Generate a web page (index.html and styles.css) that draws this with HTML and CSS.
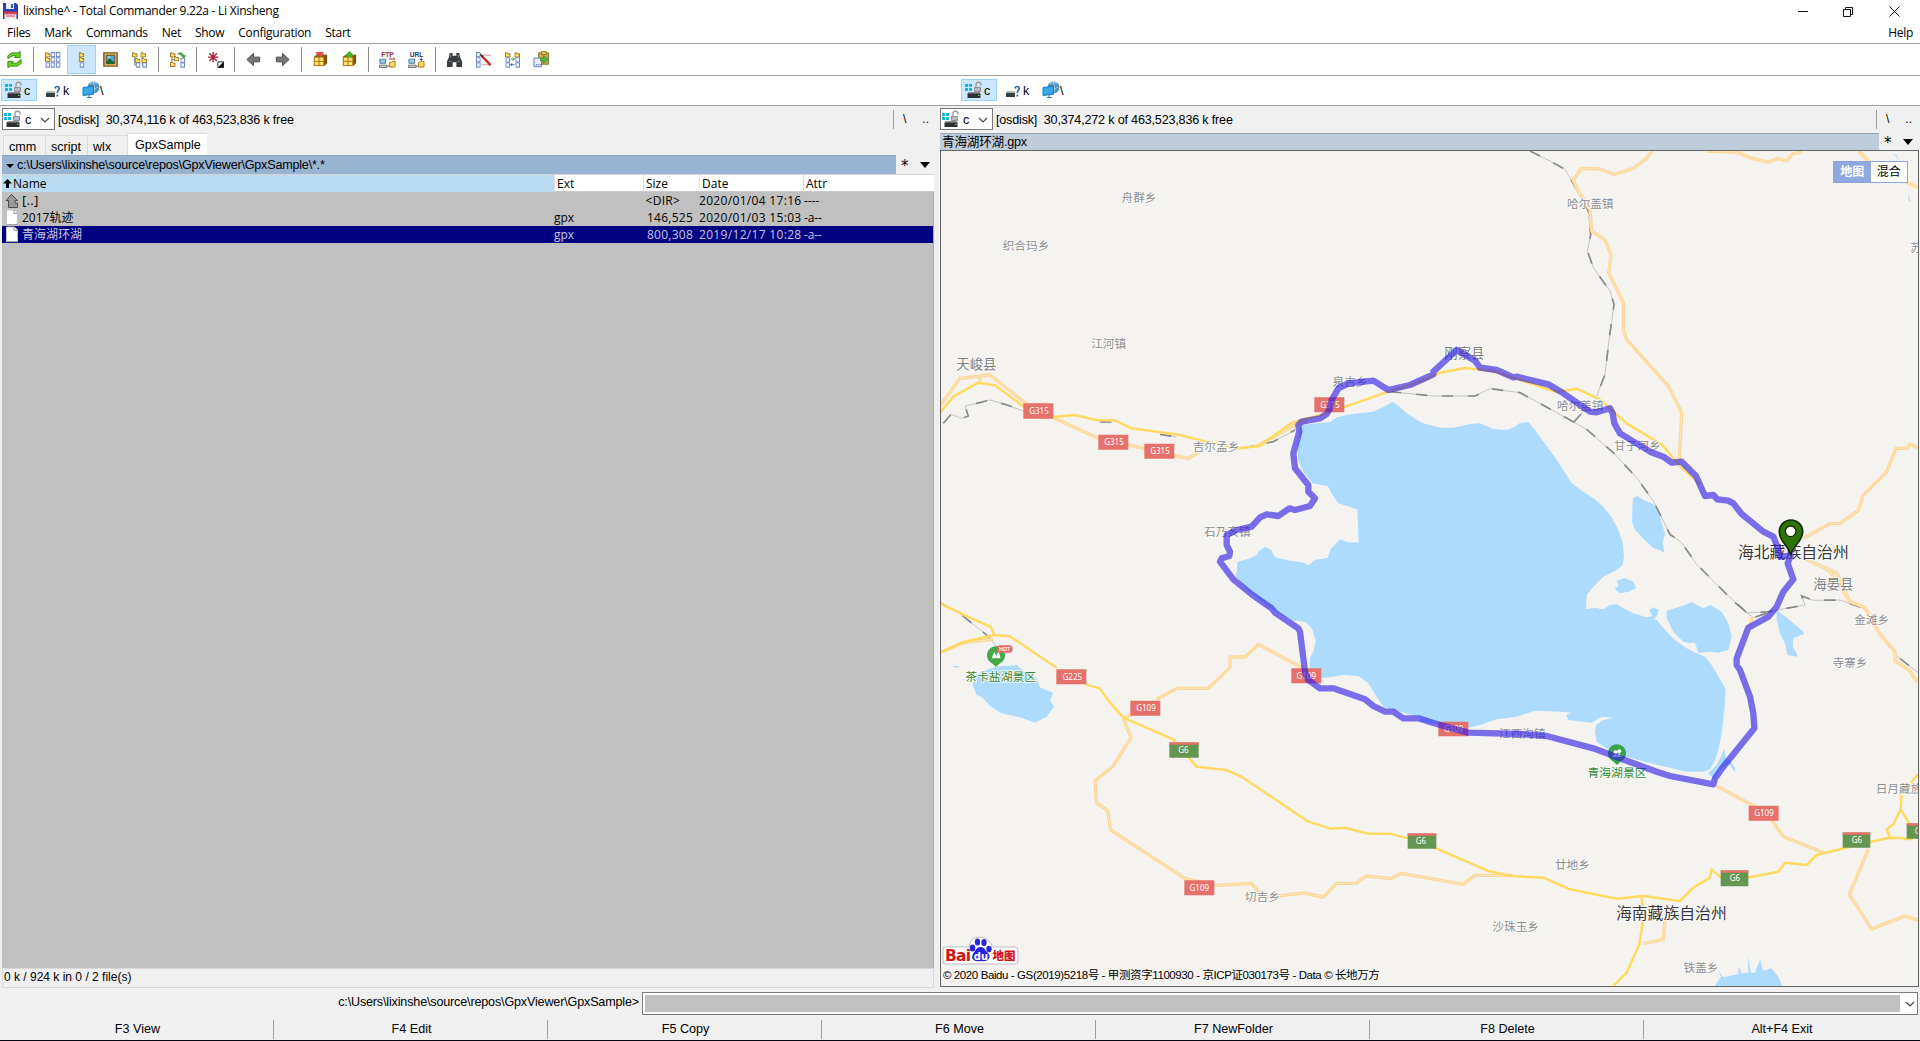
FILE: index.html
```html
<!DOCTYPE html>
<html lang="zh-CN">
<head>
<meta charset="utf-8">
<title>Total Commander</title>
<link rel="stylesheet" href="styles.css">
</head>
<body>
<svg width="0" height="0" class="defs">
  <defs>
    <symbol id="doc" viewBox="0 0 5 6"><rect x=".5" y=".5" width="4" height="4.6" fill="#eef1ff" stroke="#6378b8"/></symbol>
    <symbol id="fold" viewBox="0 0 6 6"><path d="M.5 1h2l.8 1h2.2v3.4H.5z" fill="#ffe069" stroke="#8d6a12"/></symbol>
    <symbol id="drive" viewBox="0 0 18 18">
      <path fill="#19b5dd" d="M0 3h3v3H0zM4 3h3v3H4zM0 7h3v3H0zM4 7h3v3H4z"/>
      <path d="M11 6V4a2.500 2.500 0 0 1 5-.500v1" fill="none" stroke="#999" stroke-width="1.300"/>
      <path d="M9.500 6.500h6v4h-6z" fill="#b9bcbe" stroke="#8c8f92"/>
      <path d="M3.500 11h11l1 2h-13z" fill="#8e9193"/><path d="M2.500 12.500h13V17h-13z" fill="#2e3133"/>
      <path d="M13 14.500h1.500" stroke="#5fe05f"/>
    </symbol>
    <symbol id="qdrive" viewBox="0 0 18 18">
      <path d="M3 10h7l1 2.500H2z" fill="#aeb1b3"/><path d="M2 12h9v4H2z" fill="#393c3e"/>
      <path d="M11 7.500q.300-2 2.200-2 2 0 2 1.900 0 1.100-1 2-.900.700-.900 2.600M13.300 13.500v2" fill="none" stroke="#3568a8" stroke-width="1.700"/>
    </symbol>
    <symbol id="net" viewBox="0 0 18 18">
      <circle cx="11.500" cy="6.500" r="6" fill="#4f93bd"/><path d="M8 3q3-3 7-.500M7 7q4 3 9-1M11 1q3 5 1 11" stroke="#a5d3ea" fill="none"/>
      <path d="M1 6.500l10.500-1.300v8L1 14.500z" fill="#36a9e6" stroke="#1b78b5"/><path d="M5 16.500h5M7 14v3" stroke="#347ca5"/>
    </symbol>
    <symbol id="box" viewBox="0 0 16 16">
      <path d="M1 5l3-2h11v9l-3 3H1z" fill="#7a520d"/><path d="M1.500 5.500h10v9h-10z" fill="#ffe16e" stroke="#b07c15"/><path d="M6.500 5.500v9M1.500 10h10" stroke="#a8740f"/>
    </symbol>
    <symbol id="conn" viewBox="0 0 18 10">
      <path d="M1 .500h6v4.500H1z" fill="#8fd0f5" stroke="#53708e"/><path d="M.500 7h8v2.500h-8z" fill="#c9c9c9" stroke="#777"/>
      <path d="M8.500 8h3" stroke="#777"/><path d="M11 4h2l1-1h3v6h-6z" fill="#ffd661" stroke="#a67a19"/>
    </symbol>
    <symbol id="chev" viewBox="0 0 10 10"><path d="M1 3l4 4 4-4" fill="none" stroke="#444" stroke-width="1.100"/></symbol>
    <symbol id="page" viewBox="0 0 14 17"><path d="M1.500 1h8l3 3v11.500h-11z" fill="#fff" stroke="#c8c8c8"/><path d="M9 1v3.500h3.500M2 15.700h11" fill="none" stroke="#9a9a9a"/></symbol>
  </defs>
</svg>

<header class="title">
  <svg class="app-icon" width="17" height="18" viewBox="0 0 17 18"><path d="M1 1h13l2 2v14H1z" fill="#2b3fb4"/><path d="M4 1h8v6H4z" fill="#e9eef8"/><path d="M9 2h2v4H9z" fill="#2d5fa5"/><path d="M2.500 10h12v7h-12z" fill="#f5e9ea"/><path d="M2.500 10h12v1.800h-12zM4 14h9" fill="#d23a49" stroke="#d23a49"/></svg>
  <span class="title-text">lixinshe^ - Total Commander 9.22a - Li Xinsheng</span>
  <svg class="win" width="120" height="20" viewBox="0 0 120 20" fill="none" stroke="#111"><path d="M4 10.500h10"/><path d="M49.500 8.500h7v7h-7zM51.500 8V6.500h7v7H57"/><path d="M95.500 5.500l10 10M105.500 5.500l-10 10"/></svg>
</header>
<nav class="menu"><span>Files</span><span>Mark</span><span>Commands</span><span>Net</span><span>Show</span><span>Configuration</span><span>Start</span><span class="help">Help</span></nav>

<div class="tools">
  <button><svg viewBox="0 0 18 18"><path d="M2 8V5l4-3h7l2-1.500V7H9l2-2H7z" fill="#6fd323" stroke="#318a0d"/><path d="M16 9v4l-4 3H5l-3 1.500V11h6l-2 2h5z" fill="#6fd323" stroke="#318a0d"/></svg></button><i></i>
  <button><svg viewBox="0 0 18 18"><use href="#fold" x="1" y="1" width="6" height="6"/><use href="#fold" x="1" y="6" width="6" height="6"/><use href="#doc" x="1.500" y="12" width="5" height="6"/><use href="#doc" x="7" y="1" width="5" height="6"/><use href="#doc" x="7" y="6.500" width="5" height="6"/><use href="#doc" x="7" y="12" width="5" height="6"/><use href="#doc" x="12.500" y="1" width="5" height="6"/><use href="#doc" x="12.500" y="6.500" width="5" height="6"/><use href="#doc" x="12.500" y="12" width="5" height="6"/></svg></button>
  <button class="on"><svg viewBox="0 0 18 18"><use href="#fold" x="6" y="1" width="6" height="6"/><use href="#fold" x="6" y="6" width="6" height="6"/><use href="#doc" x="7" y="12" width="5" height="6"/></svg></button>
  <button><svg viewBox="0 0 18 18"><path d="M2 2h14v14H2z" fill="#e9c672" stroke="#7a541a" stroke-width="1.500"/><path d="M4.500 4.500h9v9h-9z" fill="#4aa9d8" stroke="#5a471e"/><path d="M5 11l3-3 5 4v1.500H5z" fill="#17672f"/><path d="M6 6.500h3" stroke="#fff"/></svg></button>
  <button><svg viewBox="0 0 18 18"><path d="M4 6v9h3M12 6v9h3" stroke="#777" fill="none"/><use href="#fold" x="1" y="1" width="6" height="6"/><use href="#fold" x="4" y="7" width="6" height="6"/><use href="#doc" x="5" y="12" width="5" height="6"/><use href="#fold" x="10" y="1" width="6" height="6"/><use href="#fold" x="11" y="7" width="6" height="6"/><use href="#doc" x="12" y="12" width="5" height="6"/></svg></button><i></i>
  <button><svg viewBox="0 0 18 18"><path d="M3 3v13M3 9h3" stroke="#777" fill="none"/><use href="#fold" x="1" y="1" width="6" height="6"/><use href="#fold" x="5" y="5" width="6" height="6"/><use href="#fold" x="1" y="11" width="6" height="6"/><use href="#doc" x="12" y="7" width="5" height="6"/><use href="#doc" x="12" y="12" width="5" height="6"/><path d="M9 3q5-3 7 3M13.500 5h4l-2 2.500z" fill="#33a333" stroke="#33a333"/></svg></button><i></i>
  <button><svg viewBox="0 0 18 18"><path d="M6.500 1v11M1 6.500h11M2.500 2.500l8 8M10.500 2.500l-8 8" stroke="#a5233b" stroke-width="1.500"/><path d="M11.500 11.500h6v6h-6z" fill="#fff" stroke="#222"/><path d="M17.500 11.500v6h-6z" fill="#111"/></svg></button><i></i>
  <button><svg viewBox="0 0 18 18"><path d="M2 9l7-6.500v4h6.500v5H9v4z" fill="#777" stroke="#444"/></svg></button>
  <button><svg viewBox="0 0 18 18"><path d="M16 9L9 2.500v4H2.500v5H9v4z" fill="#777" stroke="#444"/></svg></button><i></i>
  <button><svg viewBox="0 0 18 18"><use href="#box" x="1" y="1" width="16" height="16"/><path d="M4 1h8v3L9 6 5 4z" fill="#e05050"/></svg></button>
  <button><svg viewBox="0 0 18 18"><use href="#box" x="1" y="1" width="16" height="16"/><path d="M9 0l5 5h-3v2H7V5H4z" fill="#42b722"/></svg></button><i></i>
  <button><svg viewBox="0 0 18 18"><text x="9" y="6.500" class="mini ftp">FTP</text><use href="#conn" x="0" y="8" width="18" height="10"/><path d="M11 8.500h6M11 8.500l1.500-1.500M17 8.500L15.500 7" stroke="#b03030" fill="none"/></svg></button>
  <button><svg viewBox="0 0 18 18"><text x="9" y="6.500" class="mini url">URL</text><use href="#conn" x="0" y="8" width="18" height="10"/><path d="M14 7v4M12.500 9h3" stroke="#27449b"/></svg></button><i></i>
  <button><svg viewBox="0 0 18 18"><path d="M4 2h3v3h4V2h3l1 5 2 4v6h-6v-5H7v5H1v-6l2-4z" fill="#3a3d40"/><path d="M3 11h3M12 11h3M5 4v3M13 4v3" stroke="#8d9297"/></svg></button>
  <button><svg viewBox="0 0 18 18"><use href="#doc" x="1" y="1" width="5" height="6"/><use href="#doc" x="1" y="6.500" width="5" height="6"/><use href="#doc" x="1" y="12" width="5" height="6"/><path d="M7 4.500h10M7 14.500h10" stroke="#c99"/><path d="M7 5l9.500 10" stroke="#c92626" stroke-width="2.500"/><path d="M5.500 3.500l2.500 2.500" stroke="#222" stroke-width="1.500"/></svg></button>
  <button><svg viewBox="0 0 18 18"><use href="#fold" x="1" y="1" width="6" height="6"/><use href="#fold" x="11" y="1" width="6" height="6"/><use href="#doc" x="1.500" y="6.500" width="5" height="6"/><use href="#doc" x="12" y="6.500" width="5" height="6"/><use href="#doc" x="1.500" y="12" width="5" height="6"/><use href="#doc" x="12" y="12" width="5" height="6"/><path d="M7 8.500h4M9.500 7L11 8.500 9.500 10" stroke="#229022" fill="none"/><path d="M11 14.500H7M8.500 13L7 14.500 8.500 16" stroke="#2763c2" fill="none"/></svg></button>
  <button><svg viewBox="0 0 18 18"><path d="M6 2h10.500v12H6z" fill="#c6ad5b" stroke="#7f6930"/><path d="M9 .500h5v3H9z" fill="#f2cf43" stroke="#8f7420"/><path d="M1 7.500h6l2 2v7H1z" fill="#e5edff" stroke="#6376c1"/><path d="M3 14.500h5" stroke="#24378f" stroke-dasharray="1 1"/><path d="M11 5l5 4-5 4v-2.500H8v-3h3z" fill="#55bd33" stroke="#2e7d18" stroke-width=".6"/></svg></button>
</div>

<div class="drivebar">
  <div class="drives"><span class="drv on"><svg><use href="#drive"/></svg>c</span><span class="drv"><svg><use href="#qdrive"/></svg>k</span><span class="drv net"><svg><use href="#net"/></svg>\</span></div>
  <div class="drives"><span class="drv on"><svg><use href="#drive"/></svg>c</span><span class="drv"><svg><use href="#qdrive"/></svg>k</span><span class="drv net"><svg><use href="#net"/></svg>\</span></div>
</div>

<main class="panels">
  <section class="panel">
    <div class="info"><span class="combo"><svg class="dv"><use href="#drive"/></svg>c<svg class="cv"><use href="#chev"/></svg></span><span class="free">[osdisk]&nbsp; 30,374,116 k of 463,523,836 k free</span><span class="up"><b>\</b><b>..</b></span></div>
    <div class="tabs"><span>cmm</span><span>script</span><span class="w3">wlx</span><span class="act">GpxSample</span></div>
    <div class="path"><span class="crumb"><svg width="9" height="6"><path d="M0 1h8L4 5z"/></svg>c:\Users\lixinshe\source\repos\GpxViewer\GpxSample\*.*</span><span class="pbtn"><em>*</em><svg width="10" height="6"><path d="M0 0h10L5 6z"/></svg></span></div>
    <div class="row head"><span class="name"><svg width="9" height="10"><path d="M4.500 0L9 4.500H6V9H3V4.500H0z"/></svg>Name</span><span>Ext</span><span>Size</span><span>Date</span><span>Attr</span></div>
    <div class="list">
      <div class="row"><span class="name"><svg width="14" height="16" viewBox="0 0 14 16"><path d="M6.500 1.500l6 6h-2.500v2.500h2.500v4.500h-9v-7H1z" fill="#999" stroke="#4c4c4c"/></svg><span class="parent">[..]</span></span><span></span><span class="size">&lt;DIR&gt;</span><span class="date">2020/01/04 17:16</span><span class="at">----</span></div>
      <div class="row"><span class="name"><svg width="14" height="17"><use href="#page"/></svg>2017轨迹</span><span>gpx</span><span class="size">146,525</span><span class="date">2020/01/03 15:03</span><span class="at">-a--</span></div>
      <div class="row sel"><span class="name"><svg width="14" height="17"><use href="#page"/></svg>青海湖环湖</span><span>gpx</span><span class="size">800,308</span><span class="date">2019/12/17 10:28</span><span class="at">-a--</span></div>
    </div>
    <div class="status">0 k / 924 k in 0 / 2 file(s)</div>
  </section>

  <section class="panel right">
    <div class="info"><span class="combo"><svg class="dv"><use href="#drive"/></svg>c<svg class="cv"><use href="#chev"/></svg></span><span class="free">[osdisk]&nbsp; 30,374,272 k of 463,523,836 k free</span><span class="up"><b>\</b><b>..</b></span></div>
    <div class="path"><span class="crumb">青海湖环湖.gpx</span><span class="pbtn"><em>*</em><svg width="10" height="6"><path d="M0 0h10L5 6z"/></svg></span></div>
    <div class="map">
      <svg class="canvas" width="978" height="835" viewBox="0 0 2934 2505">
        <!-- water -->
        <g class="water">
          <g transform="translate(0 267)"><path d="M1080 555L1170 546L1190 532L1235 522L1300 515L1335 499L1358 486L1375 497L1400 520L1445 548L1500 563V1210H1130L1118 1170L1100 1148L1080 1142H1060L1000 1110L930 1058L888 1010L893 965L930 955L950 945L958 932L975 920L993 930L1005 952L1050 962L1092 968L1105 976L1125 960L1163 953L1172 928L1200 898L1225 907L1256 908L1252 808L1195 790L1178 765L1163 738L1118 730L1090 695L1075 660L1072 620Z"/></g>
          <g transform="translate(1440 267)">
            <path d="M0 555L40 563H100L150 552L180 550L220 567L262 570L285 560L298 550L325 546L345 570L370 605L400 645L430 690L455 730L490 755L520 775L550 800L575 832L595 870L608 910L612 950L608 975L590 990L550 1010L520 1040L500 1065L498 1108L525 1103L550 1108L570 1095L590 1092L610 1105L640 1120L680 1132L697 1128L688 1110L700 1102L716 1110L712 1125L703 1138L725 1165L745 1200H0Z"/>
            <path d="M638 790L640 775L652 768L670 780L700 792L718 820L725 850L735 880L728 910L733 933L727 938L722 931L700 925L665 890L645 870L636 845Z"/>
            <path d="M583 1045L597 1038L590 1022L615 1014L640 1025L648 1045L625 1055L600 1060Z"/>
          </g>
          <g transform="translate(0 1347)">
            <path d="M1060 62L1095 64L1115 80L1128 120L1120 155L1110 175L1108 210L1145 235L1210 225L1255 228L1285 250L1310 290L1330 320L1380 335L1440 352L1500 368V60Z"/>
            <path d="M105 225L165 200L230 195L262 222L290 235L300 262L340 280L330 300L342 320L320 350L285 368L240 352L185 340L150 318L125 290L110 285L98 255Z"/>
            <path d="M36 197L60 198L50 204Z"/>
          </g>
          <g transform="translate(1440 1347)">
            <path d="M0 60H710L740 95L765 120L800 145L820 155L855 170L875 195L890 220L917 268L914 320L905 400L895 450L885 480L870 508L850 515H800L700 492L620 470L560 445L530 425L525 395L528 375L550 360L580 353L545 350L515 368L445 360L438 345L456 338L420 335L345 332L290 350L230 358L180 375L140 385L0 365Z"/>
            <path d="M740 32L795 15L815 7L850 25L870 15L905 35L925 70L935 110L925 150L895 158L870 155L835 158L825 128L808 130L790 125L760 95L740 55Z"/>
            <path d="M1070 30L1090 45L1120 70L1150 95L1152 102L1120 115L1118 140L1133 165L1130 170L1103 165L1095 130L1080 100L1070 60Z"/>
            <path d="M865 520L890 495L905 465L912 445L918 475L930 480L945 505V517L925 490L900 510L885 540Z"/>
            <path d="M883 1160L903 1130L893 1108L910 1132L955 1122V1098L965 1120L985 1118L983 1070L993 1118H1005L1020 1078L1030 1112L1055 1105L1075 1130L1088 1160Z"/>
          </g>
          <path d="M2862 8L2878 30L2870 12ZM2904 124L2912 152L2906 150Z"/>
        </g>
        <!-- railways -->
        <g class="rail">
          <g id="rails">
            <path d="M10 817L33 790L65 802L85 795L75 765L110 757L150 747L195 760L250 780"/>
            <path d="M480 813H515M660 850L710 858M905 892L1000 872L1065 837"/>
            <path d="M0 1355L60 1388L140 1452L172 1490V1530"/>
            <path d="M1350 722L1480 735H1605L1650 713L1740 725L1850 785L1940 835L2020 905L2090 980L2140 1050L2190 1150L2225 1175L2270 1240L2360 1330L2420 1385L2480 1383L2595 1362L2585 1335L2620 1348L2700 1347L2780 1375L2808 1430L2870 1515L2934 1565"/>
            <path d="M1900 815L1940 770M1770 0L1830 30L1875 55L1908 112L1945 180L1952 252L1942 300L1960 350L2010 420L2022 460L2008 560L1995 670L1970 735"/>
            <path d="M2385 1355L2440 1400L2500 1380"/>
          </g>
          <use href="#rails" class="dash"/>
        </g>
        <!-- secondary roads -->
        <g class="minor">
          <g id="minors">
            <path d="M0 765L60 682L150 672L255 755L350 805L475 862L600 890L745 923L790 895M120 675V695"/>
            <path d="M950 885L1070 820L1100 812"/>
            <path d="M650 1645L712 1612H805L870 1550V1518H915L955 1480L1090 1552"/>
            <path d="M550 1702L600 1680M550 1702L573 1760L520 1845L465 1890L470 1955L503 1980L512 2037L735 2182L830 2203L935 2197L970 2240L1090 2226L1150 2238L1190 2197H1248L1278 2175L1352 2183L1385 2167L1570 2200L1605 2173H1720"/>
            <path d="M2137 0L2120 22L2080 52L2023 70L1980 54L1925 52L1900 87L1915 122L1930 142L1950 177L1955 240L1995 267L2013 312L2006 365L2050 455V535L2060 565L2185 705L2225 785L2218 930"/>
            <path d="M2300 0L2390 3L2430 20L2485 34L2515 22L2540 30L2558 8L2585 4"/>
            <path d="M2755 0L2800 45L2934 110"/>
            <path d="M2590 1162L2670 1118H2700L2755 1078L2770 1032L2840 963L2868 892H2900L2910 880L2934 890"/>
            <path d="M2590 1220L2670 1260L2730 1352L2775 1370L2820 1450L2865 1500V1530L2905 1555L2934 1595M2610 1230L2690 1265L2730 1352"/>
            <path d="M2330 1905L2480 1985L2530 2057L2650 2105M2785 2095L2728 2230L2795 2335L2830 2320L2895 2295L2934 2308"/>
            <path d="M2175 2310L2170 2365L2110 2378M2430 1425L2438 1395M0 1505L70 1475L160 1465"/>
          </g>
          <use href="#minors" class="core"/>
        </g>
        <!-- highways -->
        <g class="major">
          <path d="M0 785L40 737L115 695L165 703L255 770L310 800L405 792L470 808H525L575 832L720 852L790 870L895 892L960 885L1055 815L1150 790L1345 722L1440 693L1500 665L1575 651L1660 660L1850 723L1910 713L1980 745L2060 817L2165 880L2220 945L2280 1000"/>
          <path d="M0 1357L90 1400L153 1428L163 1452L70 1473L0 1505M163 1452L210 1456L350 1550M435 1600L480 1612L500 1642L550 1700L700 1765L770 1847L858 1857L905 1877L1105 2012L1172 2033L1215 2030L1285 2048H1350L1450 2075L1500 2097L1600 2140L1645 2160L1715 2175L1810 2180L1890 2215L2030 2243L2110 2235L2220 2250L2260 2210L2310 2180L2315 2155L2340 2177L2420 2180L2515 2162L2535 2135L2600 2142L2630 2112L2700 2095L2840 2062L2875 2060L2910 2065L2934 2055"/>
          <path d="M2105 2240L2110 2300L2098 2380L2060 2465L2020 2505M2850 2060L2840 2035L2860 2020L2882 1975L2885 1925M2882 1975L2910 2020M2934 1870L2910 1900"/>
        </g>
        <!-- place names -->
        <g class="town">
          <text x="597" y="153">舟群乡</text><text x="1951" y="172">哈尔盖镇</text><text x="258" y="296">织合玛乡</text><text x="506" y="590">江河镇</text><text x="828" y="900">吉尔孟乡</text><text x="1230" y="706">泉吉乡</text><text x="862" y="1154">石乃亥镇</text><text x="1921" y="777">哈尔盖镇</text><text x="2092" y="898">甘子河乡</text><text x="2795" y="1420">金滩乡</text><text x="2730" y="1547">寺寨乡</text><text x="1747" y="1761">江西沟镇</text><text x="2877" y="1925">日月藏族</text><text x="1897" y="2155">廿地乡</text><text x="1727" y="2339">沙珠玉乡</text><text x="2283" y="2464">铁盖乡</text><text x="967" y="2251">切吉乡</text><text x="2928" y="302">苏</text>
        </g>
        <g class="county"><text x="109" y="655">天峻县</text><text x="1573" y="622">刚察县</text><text x="2680" y="1315">海晏县</text></g>
        <g class="pref"><text x="2560" y="1222">海北藏族自治州</text><text x="2194" y="2305">海南藏族自治州</text></g>
        <g class="scenic"><text x="182" y="1590">茶卡盐湖景区</text><text x="2031" y="1878">青海湖景区</text></g>
        <!-- scenic pins -->
        <g transform="translate(168 1514)"><path d="M0 34L-10 24A27 27 0 1 1 10 24Z" fill="#47a848"/><path d="M-13 8L-5-12 1 2V8M2 8V-4L8-12 14 8Z" fill="#fff"/></g>
        <g transform="translate(2031 1808)"><path d="M0 34L-10 24A27 27 0 1 1 10 24Z" fill="#36a447"/><circle cx="-5" cy="-4" r="6" fill="#fff"/><circle cx="7" cy="-7" r="6" fill="#fff"/><path d="M-14 10L-6 0 0 5 7-2 14 10Z" fill="#fff"/></g>
        <rect x="170" y="1483" width="48" height="22" rx="11" fill="#e96568"/><text x="194" y="1500" class="hot">HOT</text>
        <!-- road shields -->
        <g class="shield">
          <path class="red" d="M250 757h90v46h-90zM475 851h90v45h-90zM613 878h90v45h-90zM1123 739h90v45h-90zM349 1555h90v45h-90zM571 1649h90v45h-90zM1054 1552h90v45h-90zM733 2188h90v45h-90zM1495 1712h90v44h-90zM2426 1964h90v45h-90z"/>
          <path class="green" d="M688 1775h88v45h-88zM1403 2048h86v45h-86zM2708 2045h83v45h-83zM2342 2159h83v47h-83zM2900 2018h83v45h-83z"/>
          <path class="red" d="M688 1774h88v7h-88zM1403 2047h86v7h-86zM2708 2044h83v7h-83zM2342 2158h83v7h-83zM2900 2017h83v7h-83z"/>
          <text x="297" y="789">G315</text><text x="522" y="882">G315</text><text x="660" y="909">G315</text><text x="1170" y="771">G315</text><text x="397" y="1586">G225</text><text x="618" y="1680">G109</text><text x="1099" y="1584">G109</text><text x="778" y="2219">G109</text><text x="1541" y="1743">G109</text><text x="2472" y="1995">G109</text>
          <text x="730" y="1806">G6</text><text x="1443" y="2079">G6</text><text x="2751" y="2076">G6</text><text x="2385" y="2190">G6</text><text x="2940" y="2049">G6</text>
        </g>
        <!-- recorded track -->
        <path class="track" d="M2552 1214L2520 1217L2510 1182L2500 1157L2470 1142L2405 1089L2380 1057L2365 1049L2332 1045L2320 1032L2295 1035L2268 975L2225 932L2195 935L2170 917L2130 902L2040 847L2023 817L2018 787L2010 772L1970 784L1950 782L1870 727L1825 700L1730 677L1720 679L1670 657L1620 650L1605 629L1550 597L1480 662V670L1410 702L1345 717L1300 689L1225 697L1195 712L1175 747L1170 772L1160 789L1140 802L1085 812L1075 822L1078 842L1060 907L1065 952L1105 1002V1022L1125 1042L1110 1065L1065 1077L1048 1072L1015 1095L980 1090L960 1099L935 1127L890 1137L860 1152V1182L870 1202L868 1215L845 1222L840 1232L880 1285L935 1330L995 1372L1005 1385L1075 1432L1080 1442L1095 1562L1105 1587L1140 1612H1180L1275 1645L1300 1665L1335 1682H1360L1390 1702H1435L1500 1722L1585 1745L1740 1749L1820 1755L1960 1792L2040 1822L2150 1862L2190 1875L2320 1900L2325 1882L2350 1847L2443 1732L2440 1687L2430 1637L2400 1557L2390 1542V1522L2425 1430L2485 1397L2510 1367L2530 1322L2560 1285L2543 1237L2552 1214"/>
        <path d="M2552 1212C2546 1184 2518 1172 2518 1142A35 35 0 0 1 2588 1142C2588 1172 2558 1184 2552 1212Z" fill="#2d7407" stroke="#142b05" stroke-width="5"/><circle cx="2552" cy="1141" r="16" fill="#fff" stroke="#142b05" stroke-width="4"/>
      </svg>
      <div class="maptype"><span class="cur">地图</span><span>混合</span></div>
      <svg class="logo" width="78" height="30" viewBox="0 0 78 30">
        <path d="M3 11H27Q28 2 35 1.500Q44-1 50 9V11H73Q76 11 76 14V25Q76 28 73 28H3Q1 28 1 25V13Q1 11 3 11Z" fill="#fff" stroke="#bbb"/>
        <text x="3" y="25" class="bai">Bai</text>
        <g fill="#2826d7"><ellipse cx="30.500" cy="12" rx="2.800" ry="3.600"/><ellipse cx="35.500" cy="6" rx="2.700" ry="3.600"/><ellipse cx="42" cy="6.500" rx="2.700" ry="3.500"/><ellipse cx="47" cy="13" rx="2.700" ry="3.300"/><path d="M38.500 11Q42 11 44 15Q48 18 47.500 21.500Q46 26 38.500 25Q31 26 30 21.500Q30 18 33 15Q35 11 38.500 11Z"/></g>
        <text x="39" y="23.500" class="du">du</text><text x="50.500" y="24" class="ditu">地图</text>
      </svg>
      <div class="copy">© 2020 Baidu - GS(2019)5218号 - 甲测资字1100930 - 京ICP证030173号 - Data © 长地万方</div>
    </div>
  </section>
</main>

<div class="cmd"><label>c:\Users\lixinshe\source\repos\GpxViewer\GpxSample&gt;</label><div class="field"><div class="fill"></div><svg class="cv"><use href="#chev"/></svg></div></div>
<footer class="keys"><span>F3 View</span><span>F4 Edit</span><span>F5 Copy</span><span>F6 Move</span><span>F7 NewFolder</span><span>F8 Delete</span><span>Alt+F4 Exit</span></footer>
</body>
</html>
```
FILE: styles.css
```css
* { box-sizing: border-box; }
body { margin: 0; width: 1920px; height: 1041px; overflow: hidden; display: flex; flex-direction: column; background: #f0f0f0; color: #000; font: 12px/16px "Open Sans", "Noto Sans CJK SC", sans-serif; border-bottom: 1px solid #05050f; white-space: nowrap; }
.defs { position: absolute; }
.title { height: 23px; background: #fff; display: flex; align-items: center; padding: 0 6px 1px 2px; flex: none; }
.title-text { margin-left: 4px; letter-spacing: -.25px; }
.win { margin-left: auto; }
.menu { height: 20px; background: #fff; display: flex; gap: 14px; padding: 2px 7px 0 7px; letter-spacing: -.28px; flex: none; }
.help { margin-left: auto; }
.tools { height: 33px; background: #fff; border-top: 1px solid #a0a0a0; border-bottom: 1px solid #a0a0a0; display: flex; align-items: center; flex: none; padding-bottom: 1px; }
.tools button { width: 29px; height: 29px; border: 1px solid transparent; background: none; padding: 0; display: grid; place-items: center; flex: none; }
.tools button.on { background: #cce8ff; border-color: #99d1ff; }
.tools svg { width: 17px; height: 17px; }
.tools i { width: 1px; height: 25px; background: #8c8c8c; margin: 0 4px; }
.mini { font: 700 7px "Liberation Sans", sans-serif; text-anchor: middle; }
.ftp { fill: #91263c; }
.url { fill: #22357e; }
.drivebar { height: 30px; background: #fff; border-bottom: 1px solid #a0a0a0; display: grid; grid-template-columns: 960px 960px; align-items: center; flex: none; font: 12.500px "Liberation Sans", sans-serif; padding-bottom: 1px; }
.drives { display: flex; gap: 3px; padding-left: 1px; }
.drv { width: 36px; height: 22px; padding: 2px 0 0 3px; border: 1px solid transparent; display: flex; align-items: center; gap: 1px; }
.drv svg { width: 18px; height: 18px; margin-top: -2px; }
.drv.on { background: #cce8ff; border-color: #99d1ff; }
.drv.net { gap: 0; padding-left: 2px; }
.panels { height: 882px; display: grid; grid-template-columns: 938px 982px; flex: none; }
.panel { display: flex; flex-direction: column; padding: 2px 4px 0 2px; }
.panel.right { padding-right: 3px; }
.info { height: 22px; display: flex; align-items: center; font: 12.600px "Liberation Sans", sans-serif; }
.combo { width: 53px; height: 22px; background: #fff; border: 1px solid #7a7a7a; display: flex; align-items: center; padding: 1px 4px 0 1px; }
.combo .dv { width: 18px; height: 18px; margin-right: 3px; margin-top: -2px; }
.combo .cv { width: 10px; height: 10px; margin-left: auto; }
.free { margin-left: 3px; letter-spacing: -.19px; padding-top: 1px; }
.up { margin-left: auto; border-left: 1px solid #a0a0a0; height: 19px; display: flex; gap: 16px; padding: 2px 5px 0 9px; }
.up b { font-weight: 400; font-size: 12px; }
.tabs { height: 25px; padding: 2px 0 0 1px; display: flex; align-items: end; font: 12.600px "Liberation Sans", sans-serif; }
.tabs span { height: 20px; width: 42px; border: 1px solid #dcdcdc; border-bottom: 0; border-right: 0; padding: 4px 0 0 5px; }
.tabs .w3 { width: 40px; }
.tabs .act { width: 80px; height: 22px; background: #fff; padding-left: 7px; }
.path { height: 19px; display: flex; }
.crumb { flex: 1; background: #99b4d1; border-top: 1px solid #8fa3ba; padding: 2px 0 0 4px; font: 12.600px/15px "Liberation Sans", "Noto Sans CJK SC", sans-serif; letter-spacing: -.21px; }
.crumb svg { margin-right: 2px; }
.pbtn { width: 38px; display: flex; align-items: center; gap: 11px; padding-left: 5px; }
.pbtn em { font: 15px/1 "DejaVu Sans"; height: 11px; width: 8px; }
.right .path { height: 20px; padding-top: 3px; }
.right .crumb { background: #bfcddb; padding: 1px 0 0 2px; border-top: 1px solid #98a5b3; line-height: 15px; }
.row { display: grid; grid-template-columns: 552px 89px 56px 104px 1fr; height: 17px; line-height: 17px; }
.head { height: 18px; background: #fff; border-bottom: 1px solid #c8c8c8; border-top: 1px solid #d6d6d6; }
.head span { padding-left: 3px; }
.head span + span { border-left: 1px solid #dedede; padding-left: 2px; line-height: 17px; }
.head .name { background: #badcf3; padding-left: 1px; }
.name { display: flex; align-items: center; gap: 1px; }
.list { flex: 1; background: #c0c0c0; border-right: 1px solid #aaa; }
.list .name { padding-left: 3px; gap: 3px; }
.parent { font-size: 13.500px; letter-spacing: .2px; }
.list .size { text-align: right; padding-right: 6px; letter-spacing: .25px; }
.list .row:first-child .size { padding-right: 19px; }
.date { letter-spacing: .32px; }
.list .at { padding-left: 1px; letter-spacing: -.1px; }
.sel { background: #000080; color: #c6c6e4; }
.status { height: 20px; border: 1px solid #d9d9d9; padding: 0 1px; font: 12px/17px "Liberation Sans", sans-serif; letter-spacing: 0; }
.map { width: 979px; height: 837px; border: 1px solid #666; position: relative; background: #f4f3f0; overflow: hidden; }
.canvas { display: block; margin-left: -1px; }
.water { fill: #addbfd; }
.rail { fill: none; stroke: #c4c4c4; stroke-width: 3; }
.rail .dash { stroke: #8a8a8a; stroke-width: 5; stroke-dasharray: 34 44; }
.minor { fill: none; stroke: #fcd797; stroke-width: 10; stroke-linejoin: round; }
.minor .core { stroke: #fde6bf; stroke-width: 3; }
.major { fill: none; stroke: #fedb60; stroke-width: 7.500; stroke-linejoin: round; }
.canvas text { text-anchor: middle; font-family: "Noto Sans CJK SC", sans-serif; }
.town text, .county text, .pref text, .scenic text { paint-order: stroke; stroke: #fbfaf8; stroke-width: 5; }
.town { font-size: 35px; fill: #8c8d90; }
.county { font-size: 40px; fill: #7d7d80; }
.pref { font-size: 47.500px; fill: #37373b; }
.scenic { font-size: 35.500px; fill: #338c3b; }
.canvas .hot { font-size: 16px; fill: #fff; font-weight: 700; }
.red { fill: #e6716b; }
.green { fill: #659650; }
.shield text { font-family: "Noto Sans", sans-serif; font-size: 24px; fill: #fff; }
.track { fill: none; stroke: #2814e6; stroke-opacity: .6; stroke-width: 19; stroke-linejoin: round; stroke-linecap: round; }
.maptype { position: absolute; top: 10px; right: 10px; display: flex; width: 75px; height: 22px; border: 1px solid #8ba4dc; background: #fff; line-height: 18px; text-align: center; }
.maptype span { flex: 1; font-family: "Noto Sans CJK SC", sans-serif; }
.maptype .cur { background: #8ea8e0; color: #fff; font-weight: 700; }
.logo { position: absolute; left: 1px; bottom: 20px; }
.bai { font: 700 15.500px "DejaVu Sans", sans-serif; fill: #d91519; letter-spacing: -.8px; }
.du { font: 700 10px "DejaVu Sans", sans-serif; fill: #fff; text-anchor: middle; }
.ditu { font: 900 11.500px "Noto Sans CJK SC", sans-serif; fill: #d91519; }
.copy { position: absolute; left: 2px; bottom: 3px; font: 11.500px/16px "Liberation Sans", "Noto Sans CJK SC", sans-serif; letter-spacing: -.4px; }
.cmd { height: 28px; padding: 4px 2px 1px 0; display: flex; flex: none; }
.cmd label { width: 642px; padding: 3px 3px 0 0; text-align: right; font: 12.600px/15px "Liberation Sans", sans-serif; letter-spacing: -.17px; }
.field { flex: 1; height: 23px; border: 1px solid #7a7a7a; background: #fff; display: flex; align-items: center; padding: 2px; }
.fill { width: 1255px; height: 17px; background: #c0c0c0; }
.field .cv { width: 10px; height: 10px; margin-left: 5px; }
.keys { display: grid; grid-template-columns: repeat(7, 274px); padding-top: 4px; font: 12.600px/18px "Liberation Sans", sans-serif; }
.keys span { text-align: center; height: 19px; border-right: 1px solid #a0a0a0; padding-left: 2px; }
.keys span:last-child { border: 0; }
```
